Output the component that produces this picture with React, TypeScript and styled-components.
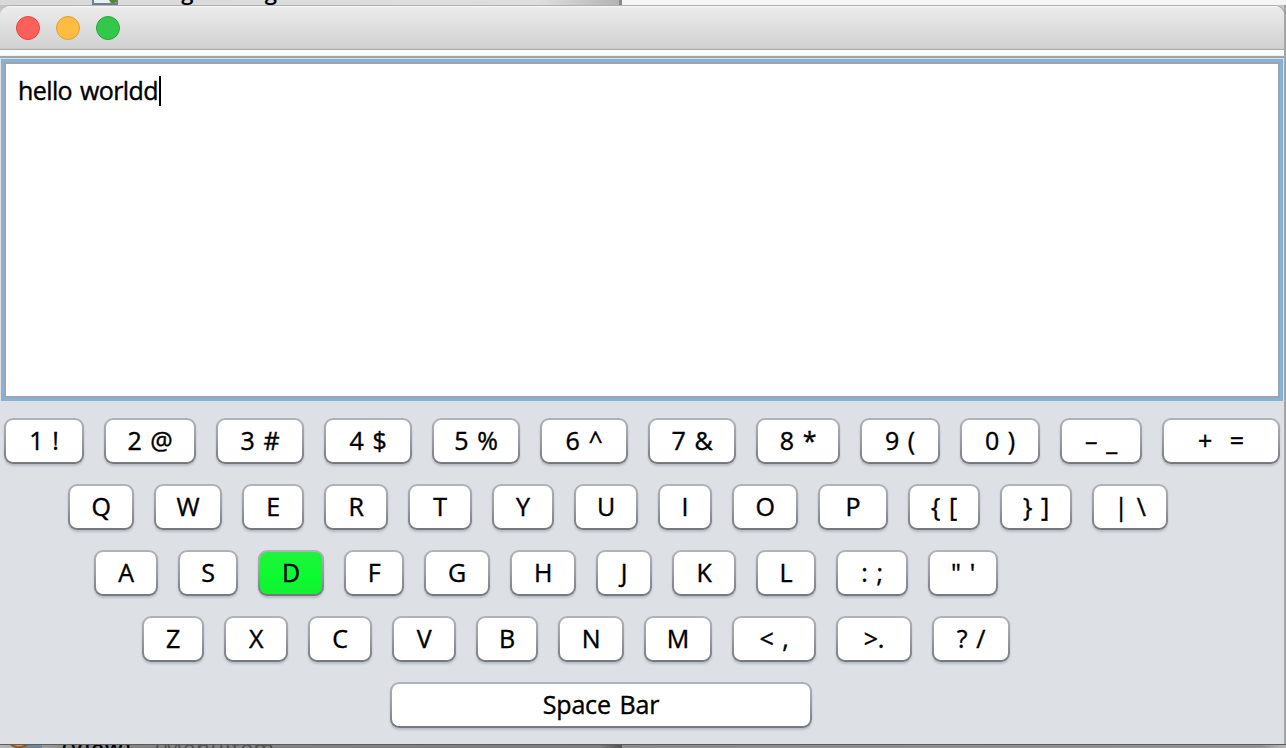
import React from "react";
import styled, { createGlobalStyle } from "styled-components";

const Global = createGlobalStyle`
  * { box-sizing: border-box; }
  body { margin: 0; overflow: hidden; background: #f4f4f4; font-family: "Open Sans", "Noto Sans", sans-serif; color: #000; }
`;

const Desktop = styled.div`
  width: 1286px;
  height: 748px;
  overflow: hidden;
  display: flex;
  flex-direction: column;
  background: linear-gradient(90deg, #c4c4c4 0 1284px, #a2a2a2 1284px);
`;

const TopStrip = styled.div`
  height: 5px;
  flex: none;
  display: flex;
  overflow: hidden;
  background: linear-gradient(90deg, #d9d9d9 0, #dedede 540px, #b4b4b4 619px, #888 619px 622px, #f5f5f5 622px);
`;

const TopIcon = styled.svg`
  flex: none;
  margin-left: 92px;
`;

const TopText = styled.span`
  margin: -20px 0 0 12px;
  font-size: 22px;
  line-height: 22px;
  font-weight: 600;
  letter-spacing: 1px;
  white-space: pre;
`;

const Window = styled.main`
  width: 1285px;
  height: 739px;
  flex: none;
  display: flex;
  flex-direction: column;
  border: solid #a5a7a8;
  border-width: 1px 1px 0 0;
  border-top-color: #b0b0b0;
  border-radius: 10px 10px 0 0;
  overflow: hidden;
  background: #dde1e6;
`;

const TitleBar = styled.header`
  height: 44px;
  flex: none;
  display: flex;
  align-items: center;
  gap: 16px;
  padding-left: 16px;
  border-bottom: 1px solid #a9adac;
  background: linear-gradient(#f8f8f8 0, #ebebeb 2px, #d1d1d1 42px, #c4c4c4);
`;

const Light = styled.i<{ $fill: string; $edge: string }>`
  width: 24px;
  height: 24px;
  border-radius: 50%;
  border: 1px solid ${(p) => p.$edge};
  background: ${(p) => p.$fill};
`;

const Divider = styled.div`
  height: 9px;
  flex: none;
  background: linear-gradient(#fafdfc 0 5px, #eef1f2 5px 6px, #9fa4a8 6px 8px, #dde1e6 8px);
`;

const Editor = styled.section`
  height: 342px;
  flex: none;
  display: flex;
  align-items: flex-start;
  margin: 0 1px;
  padding: 14px 14px;
  border: 3px solid #84b2d8;
  background: #fff;
  box-shadow: inset 0 0 0 2px #a0a5ad;
`;

const Typed = styled.span`
  font-size: 25px;
  line-height: 29px;
  letter-spacing: -0.6px;
  word-spacing: 2px;
  -webkit-text-stroke: 0.4px #000;
  white-space: pre;
`;

const Caret = styled.i`
  width: 2px;
  height: 30px;
  margin-left: 1px;
  background: #000;
`;

const Keyboard = styled.section`
  display: flex;
  flex-direction: column;
  gap: 20px;
  padding-top: 17px;
`;

const KeyRow = styled.div<{ $indent: number }>`
  display: flex;
  gap: 20px;
  padding-left: ${(p) => p.$indent}px;
`;

const Key = styled.button<{ $width: number; $pressed: boolean }>`
  width: ${(p) => p.$width}px;
  height: 46px;
  flex: none;
  display: flex;
  align-items: center;
  justify-content: center;
  padding: 0 0 2px;
  border: 2px solid transparent;
  border-radius: 9px;
  background:
    ${(p) => (p.$pressed ? "linear-gradient(#20f43c, #0cfb30 60%, #14f035)" : "linear-gradient(#fff, #fff)")} padding-box,
    linear-gradient(#afb4b8, #999da1 50%, #74787c) border-box;
  box-shadow: 0 2px 2px rgba(60, 70, 80, 0.22);
  color: #000;
  font: 25px / 30px "Open Sans", "Noto Sans", sans-serif;
  letter-spacing: -0.2px;
  word-spacing: 2.5px;
  -webkit-text-stroke: 0.4px #000;
  white-space: pre;
`;

const BottomStrip = styled.footer`
  height: 4px;
  flex: none;
  display: flex;
  overflow: hidden;
  border-top: 1px solid #5c5c5c;
  background: linear-gradient(90deg, #b4b4b4 0, #858585 80px, #7e7e7e 600px, #555 619px 622px, #8d8b8b 622px, #929292 1260px, #b8b8b8);
`;

const BottomIcon = styled.svg`
  flex: none;
`;

const BottomText = styled.span<{ $left: number; $tone: string }>`
  flex: none;
  margin: -11px 0 0 ${(p) => p.$left}px;
  font: 22px / 26px "Open Sans", sans-serif;
  font-weight: ${(p) => (p.$tone === "#000" ? 600 : 400)};
  letter-spacing: 0.8px;
  color: ${(p) => p.$tone};
  white-space: pre;
`;

type KeySpec = [label: string, width: number];

const rows: { indent: number; keys: KeySpec[] }[] = [
  { indent: 4, keys: [["1 !", 80], ["2 @", 92], ["3 #", 88], ["4 $", 88], ["5 %", 88], ["6 ^", 88], ["7 &", 88], ["8 *", 84], ["9 (", 80], ["0 )", 80], ["– _", 82], ["+  =", 118]] },
  { indent: 68, keys: [["Q", 66], ["W", 68], ["E", 62], ["R", 64], ["T", 64], ["Y", 62], ["U", 64], ["I", 54], ["O", 66], ["P", 70], ["{ [", 72], ["} ]", 72], ["| \\", 76]] },
  { indent: 94, keys: [["A", 64], ["S", 60], ["D", 66], ["F", 60], ["G", 66], ["H", 66], ["J", 56], ["K", 64], ["L", 60], [": ;", 72], ["\" '", 70]] },
  { indent: 142, keys: [["Z", 62], ["X", 64], ["C", 64], ["V", 64], ["B", 62], ["N", 66], ["M", 68], ["< ,", 84], [">.", 76], ["? /", 78]] },
  { indent: 390, keys: [["Space Bar", 422]] },
];

export default function App() {
  const pressed = "D";
  return (
    <Desktop>
      <Global />
      <TopStrip>
        <TopIcon width="26" height="5" viewBox="0 0 26 5">
          <path d="M1 0V4H25V0" fill="#e9eef3" stroke="#6f7f92" strokeWidth="2" />
          <path d="M17 0H26L23 3H19Z" fill="#4d8a2c" />
        </TopIcon>
        <TopText>Using Manager in</TopText>
      </TopStrip>
      <Window>
        <TitleBar>
          <Light $fill="#fe5f5b" $edge="#e24740" />
          <Light $fill="#fdbd40" $edge="#dea035" />
          <Light $fill="#34c84a" $edge="#25a936" />
        </TitleBar>
        <Divider />
        <Editor>
          <Typed>hello worldd</Typed>
          <Caret />
        </Editor>
        <Keyboard>
          {rows.map((row) => (
            <KeyRow key={row.indent} $indent={row.indent}>
              {row.keys.map(([label, width]) => (
                <Key key={label} $width={width} $pressed={label === pressed}>
                  {label}
                </Key>
              ))}
            </KeyRow>
          ))}
        </Keyboard>
      </Window>
      <BottomStrip>
        <BottomIcon width="42" height="4" viewBox="0 0 42 4">
          <path d="M27 0H42V4H22Z" fill="#6f8599" />
          <path d="M10 0H28Q19 7 10 0Z" fill="#8a5420" />
          <path d="M14 0H24Q19 3 14 0Z" fill="#c98f70" />
        </BottomIcon>
        <BottomText $left={20} $tone="#000">(View)</BottomText>
        <BottomText $left={24} $tone="#505050">(MenuItem</BottomText>
      </BottomStrip>
    </Desktop>
  );
}
